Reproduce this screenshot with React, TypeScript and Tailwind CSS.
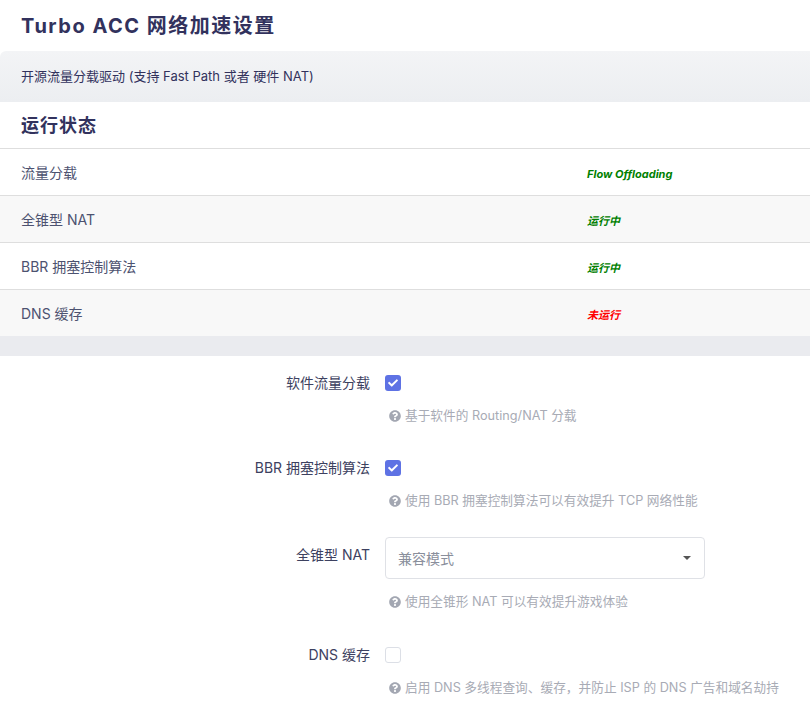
import React from 'react';
import { FaCheck, FaQuestionCircle } from 'react-icons/fa';

const font = { fontFamily: 'Inter, "Noto Sans CJK SC", sans-serif' };

interface StatusRow {
  label: string;
  value: string;
  running: boolean;
}

const statusRows: StatusRow[] = [
  { label: '流量分载', value: 'Flow Offloading', running: true },
  { label: '全锥型 NAT', value: '运行中', running: true },
  { label: 'BBR 拥塞控制算法', value: '运行中', running: true },
  { label: 'DNS 缓存', value: '未运行', running: false },
];

const Help: React.FC<{ text: string }> = ({ text }) => (
  <div className="flex items-center gap-[4px] pl-[4px] text-[12.7px] leading-[20px] text-[#a8abb5]">
    <FaQuestionCircle className="w-[12px] h-[12px] text-[#a3a7b2]" />
    <span>{text}</span>
  </div>
);

const Checkbox: React.FC<{ checked: boolean }> = ({ checked }) =>
  checked ? (
    <span className="w-[16px] h-[16px] rounded-[3px] bg-[#5e72e4] flex items-center justify-center">
      <FaCheck className="w-[10px] h-[10px] text-white" />
    </span>
  ) : (
    <span className="w-[16px] h-[16px] rounded-[3px] border border-[#dcdfe6] bg-white" />
  );

const App: React.FC = () => {
  return (
    <div className="w-[810px] min-h-[714px] bg-white text-[#32325d]" style={font}>
      {/* Header */}
      <div className="h-[51px] flex items-center pl-[21px]">
        <h2 className="text-[20px] font-bold tracking-[1.5px] text-[#32325d]">Turbo ACC 网络加速设置</h2>
      </div>
      <div className="h-[51px] flex items-center pl-[21px] bg-gradient-to-b from-[#f3f4f6] to-[#eceef1] text-[13px] text-[#32325d] rounded-tl-[6px]">
        开源流量分载驱动 (支持 Fast Path 或者 硬件 NAT)
      </div>

      {/* Status table */}
      <div className="bg-white">
        <div className="h-[46px] flex items-center pl-[21px]">
          <h3 className="text-[18px] font-bold tracking-[1px] text-[#32325d]">运行状态</h3>
        </div>
        {statusRows.map((row, i) => (
          <div
            key={row.label}
            className={`grid grid-cols-[567px_1fr] h-[47px] items-center border-t border-[#dedede] ${i % 2 === 1 ? 'bg-[#f8f8f8]' : 'bg-white'}`}
          >
            <div className="pl-[21px] text-[14px] text-[#4d5270]">{row.label}</div>
            <div className="pl-[20px]">
              <span className={`text-[11px] font-bold italic ${row.running ? 'text-[#008000]' : 'text-[#ff0000]'}`}>{row.value}</span>
            </div>
          </div>
        ))}
      </div>

      <div className="h-[20px] bg-[#eaebef]" />

      {/* Settings form */}
      <div className="bg-white pt-[10px] text-[14px]">
        <div className="grid grid-cols-[385px_1fr] mb-[25px]">
          <div className="text-right pr-[15px] pt-[7px] leading-[20px] text-[#3d4160]">软件流量分载</div>
          <div>
            <div className="h-[34px] flex items-center"><Checkbox checked /></div>
            <div className="mt-[6px]"><Help text="基于软件的 Routing/NAT 分载" /></div>
          </div>
        </div>

        <div className="grid grid-cols-[385px_1fr] mb-[26px]">
          <div className="text-right pr-[15px] pt-[7px] leading-[20px] text-[#3d4160]">BBR 拥塞控制算法</div>
          <div>
            <div className="h-[34px] flex items-center"><Checkbox checked /></div>
            <div className="mt-[6px]"><Help text="使用 BBR 拥塞控制算法可以有效提升 TCP 网络性能" /></div>
          </div>
        </div>

        <div className="grid grid-cols-[385px_1fr] mb-[26px]">
          <div className="text-right pr-[15px] pt-[8px] leading-[20px] text-[#3d4160]">全锥型 NAT</div>
          <div>
            <div className="w-[320px] h-[42px] border border-[#dfe1e6] rounded-[4px] flex items-center justify-between pl-[12px] pr-[13px] text-[#8a8f9c]">
              <span>兼容模式</span>
              <span className="w-0 h-0 border-l-[4px] border-r-[4px] border-t-[4px] border-l-transparent border-r-transparent border-t-[#555]" />
            </div>
            <div className="mt-[13px]"><Help text="使用全锥形 NAT 可以有效提升游戏体验" /></div>
          </div>
        </div>

        <div className="grid grid-cols-[385px_1fr] pb-[16px]">
          <div className="text-right pr-[15px] pt-[7px] leading-[20px] text-[#3d4160]">DNS 缓存</div>
          <div>
            <div className="h-[34px] flex items-center"><Checkbox checked={false} /></div>
            <div className="mt-[6px]"><Help text="启用 DNS 多线程查询、缓存，并防止 ISP 的 DNS 广告和域名劫持" /></div>
          </div>
        </div>
      </div>
    </div>
  );
};

export default App;
